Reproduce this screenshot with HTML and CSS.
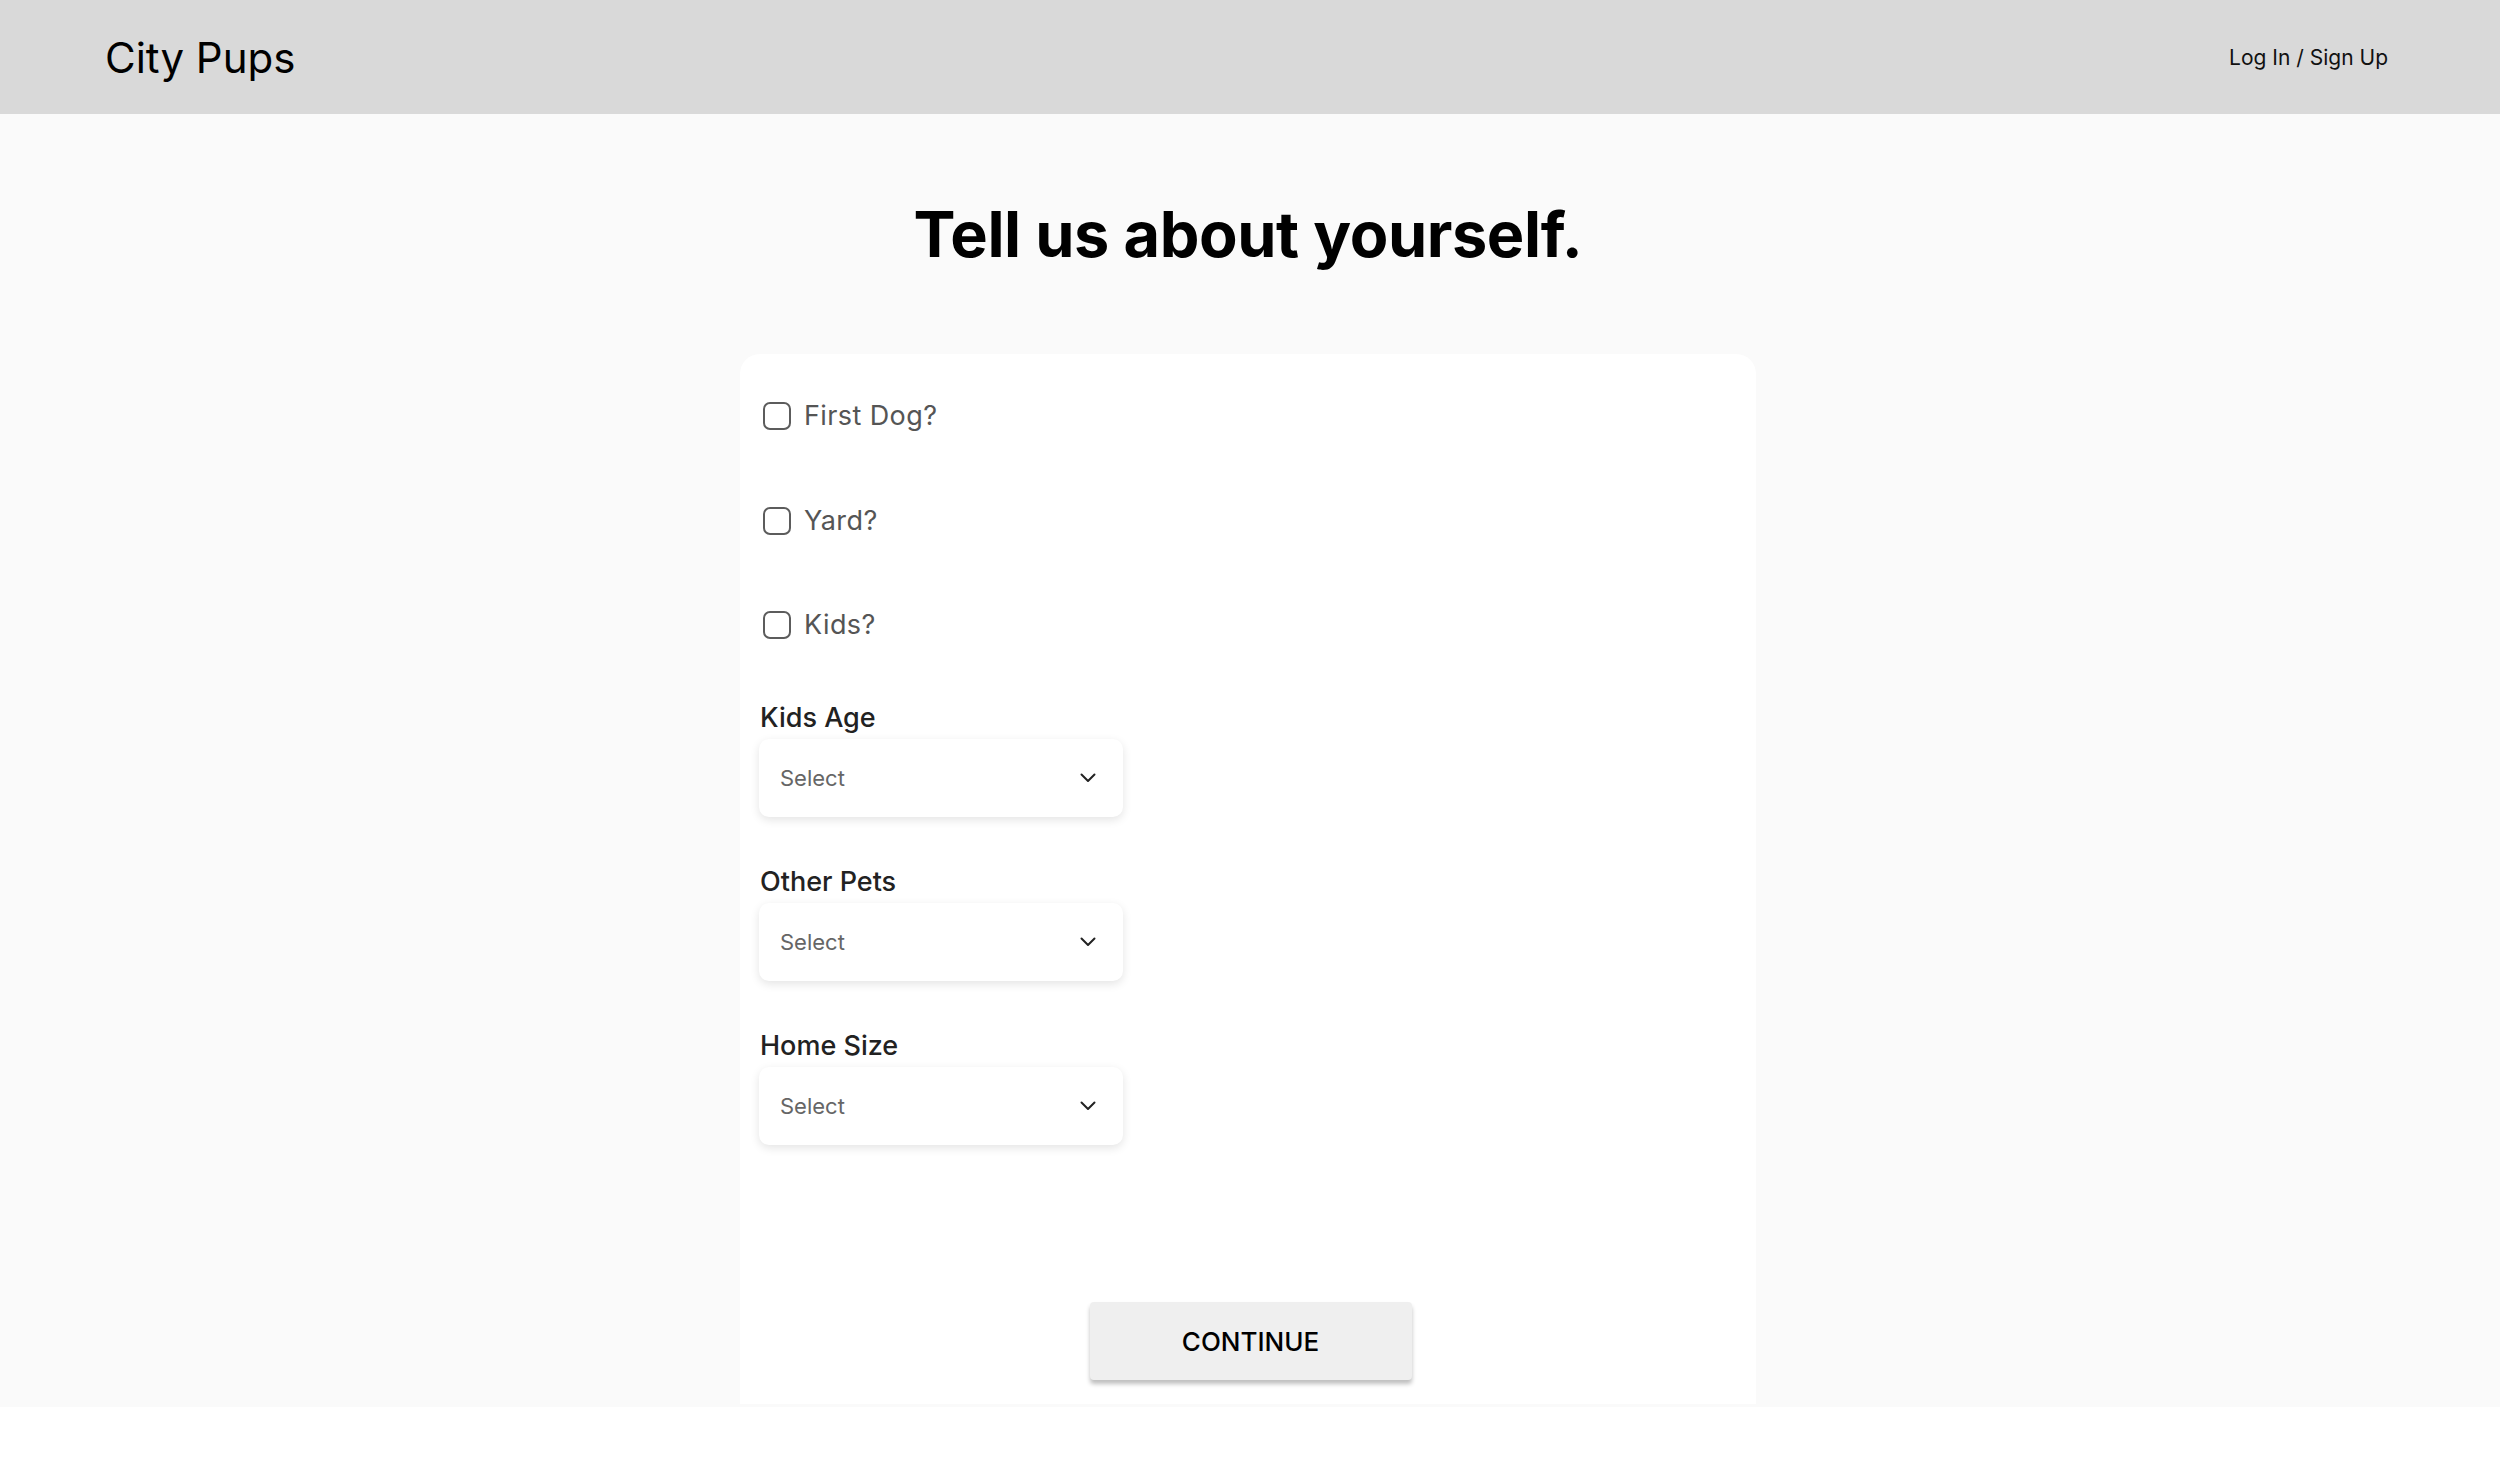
FILE: index.html
```
<!DOCTYPE html>
<html lang="en">
<head>
<meta charset="utf-8">
<title>City Pups</title>
<link rel="stylesheet" href="styles.css">
</head>
<body>
<header class="topbar">
  <div class="brand">City Pups</div>
  <a class="auth" href="#">Log In / Sign Up</a>
</header>
<main class="main">
  <h1 class="title">Tell us about yourself.</h1>
  <section class="card">
    <div class="checks">
      <label class="check"><span class="box"></span><span class="check-text">First Dog?</span></label>
      <label class="check"><span class="box"></span><span class="check-text">Yard?</span></label>
      <label class="check"><span class="box"></span><span class="check-text">Kids?</span></label>
    </div>
    <div class="fields">
      <div class="field">
        <div class="field-label">Kids Age</div>
        <div class="select"><span class="select-text">Select</span>
          <svg class="chev" width="16" height="10" viewBox="0 0 16 10"><path d="M1.5 1.5 L8 8 L14.5 1.5" fill="none" stroke="#222" stroke-width="2" stroke-linecap="round" stroke-linejoin="round"/></svg>
        </div>
      </div>
      <div class="field">
        <div class="field-label">Other Pets</div>
        <div class="select"><span class="select-text">Select</span>
          <svg class="chev" width="16" height="10" viewBox="0 0 16 10"><path d="M1.5 1.5 L8 8 L14.5 1.5" fill="none" stroke="#222" stroke-width="2" stroke-linecap="round" stroke-linejoin="round"/></svg>
        </div>
      </div>
      <div class="field">
        <div class="field-label">Home Size</div>
        <div class="select"><span class="select-text">Select</span>
          <svg class="chev" width="16" height="10" viewBox="0 0 16 10"><path d="M1.5 1.5 L8 8 L14.5 1.5" fill="none" stroke="#222" stroke-width="2" stroke-linecap="round" stroke-linejoin="round"/></svg>
        </div>
      </div>
    </div>
    <div class="actions">
      <button class="continue" type="button">CONTINUE</button>
    </div>
  </section>
</main>
</body>
</html>
```
FILE: styles.css
```
html, body {
  margin: 0;
  padding: 0;
  background: #ffffff;
}
body {
  font-family: Inter, "Liberation Sans", sans-serif;
  color: #000;
}
.topbar {
  height: 114px;
  background: #d9d9d9;
  display: flex;
  align-items: center;
  justify-content: space-between;
  padding: 2px 112px 0 105px;
  box-sizing: border-box;
}
.brand {
  font-size: 42px;
  line-height: 50px;
  font-weight: 400;
  color: #000;
}
.auth {
  font-size: 21px;
  line-height: 30px;
  color: #111;
  text-decoration: none;
}
.main {
  background: #fafafa;
  padding: 88px 0 3px;
  display: flex;
  flex-direction: column;
  align-items: center;
}
.title {
  margin: 0 4px 88px 0;
  font-size: 63px;
  line-height: 64px;
  font-weight: 700;
  letter-spacing: -0.4px;
}
.card {
  width: 1016px;
  margin-right: 4px;
  background: #fff;
  border-radius: 20px 20px 0 0;
  padding: 48px 19px 24px;
  box-sizing: border-box;
  display: flex;
  flex-direction: column;
}
.checks {
  display: flex;
  flex-direction: column;
  gap: 76.5px;
  padding-left: 4px;
}
.check {
  display: flex;
  align-items: center;
  height: 28px;
  gap: 13px;
}
.box {
  width: 28px;
  height: 28px;
  box-sizing: border-box;
  border: 2px solid #5c5c5c;
  border-radius: 7px;
  background: #fff;
}
.check-text {
  font-size: 27px;
  line-height: 30px;
  color: #555;
  letter-spacing: 0.4px;
}
.fields {
  margin-top: 63.5px;
  display: flex;
  flex-direction: column;
  gap: 50px;
}
.field {
  display: flex;
  flex-direction: column;
}
.field-label {
  font-size: 27px;
  line-height: 30px;
  font-weight: 450;
  color: #222;
  margin: 0 0 6px 1px;
  letter-spacing: 0px;
}
.select {
  width: 364px;
  height: 78px;
  background: #fff;
  border-radius: 10px;
  box-shadow: 0 3px 10px rgba(0, 0, 0, 0.11);
  display: flex;
  align-items: center;
  justify-content: space-between;
  padding: 0 27px 0 21px;
  box-sizing: border-box;
}
.select-text {
  font-size: 22px;
  line-height: 26px;
  color: #666;
  letter-spacing: 0px;
}
.chev {
  display: block;
}
.actions {
  margin-top: 157.5px;
  display: flex;
  justify-content: center;
}
.continue {
  width: 322px;
  height: 78px;
  background: #efefef;
  border: none;
  border-radius: 4px;
  box-shadow: 0 4px 4px rgba(0, 0, 0, 0.25);
  font-family: Inter, "Liberation Sans", sans-serif;
  font-size: 26px;
  font-weight: 500;
  letter-spacing: 0px;
  color: #000;
  padding: 0;
  margin-left: 5px;
}
```
